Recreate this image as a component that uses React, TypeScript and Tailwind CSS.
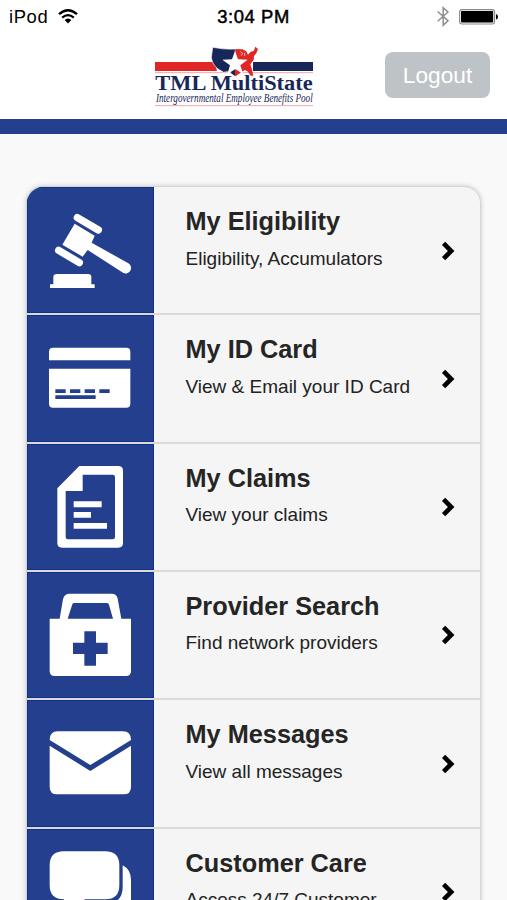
import type { ReactNode } from "react";

type MenuItem = {
  title: string;
  subtitle: string;
  icon: ReactNode;
};

const items: MenuItem[] = [
  {
    title: "My Eligibility",
    subtitle: "Eligibility, Accumulators",
    icon: (
      <>
        <g stroke="#fff" strokeWidth="22" strokeLinecap="round">
          <path d="M151 92 214 129" />
          <path d="M95 190 157 227" />
        </g>
        <path d="M143 110 203 146 194 167 304 229A16 16 0 0 1 288 257L182 189 167 209 106 173Z" />
        <path d="M79 292V271Q79 261 89 261H183Q193 261 193 271V292H203V303H69V292Z" />
      </>
    ),
  },
  {
    title: "My ID Card",
    subtitle: "View & Email your ID Card",
    icon: (
      <>
        <path d="M66 136V110Q66 98 78 98H298Q310 98 310 110V136Z" />
        <path d="M66 161H310V266Q310 278 298 278H78Q66 278 66 266Z" />
        <path
          fill="#243f8e"
          d="M85 223H116V234H85ZM129 223H160V234H129ZM173 223H204V234H173ZM217 223H248V234H217ZM85 241H206V252H85Z"
        />
      </>
    ),
  },
  {
    title: "My Claims",
    subtitle: "View your claims",
    icon: (
      <>
        <path
          fillRule="evenodd"
          d="M157 66H274Q288 66 288 80V297Q288 311 274 311H105Q91 311 91 297V133ZM167 92V141H116V279Q116 286 123 286H257Q264 286 264 279V99Q264 92 257 92Z"
        />
        <path d="M140 172H224V190H140ZM140 204H192V221H140ZM140 237H240V254H140Z" />
      </>
    ),
  },
  {
    title: "Provider Search",
    subtitle: "Find network providers",
    icon: (
      <path
        fillRule="evenodd"
        d="M68 140H98L108 82Q111 65 128 65H254Q269 65 272 80L283 140H312V297Q312 312 297 312H83Q68 312 68 297ZM122 140H258L246 98Q245 93 240 93H142Q137 93 136 97ZM172 178V212H138V246H172V281H207V246H242V212H207V178Z"
      />
    ),
  },
  {
    title: "My Messages",
    subtitle: "View all messages",
    icon: (
      <>
        <path d="M68 120Q68 94 92 94H288Q312 94 312 120L190 195Z" />
        <path d="M68 137 190 213 312 137V260Q312 283 289 283H91Q68 283 68 260Z" />
      </>
    ),
  },
  {
    title: "Customer Care",
    subtitle: "Access 24/7 Customer",
    icon: (
      <>
        <path d="M110 67H235Q277 67 277 109V169Q277 211 235 211H174L111 260V211Q68 211 68 169V109Q68 67 110 67Z" />
        <path d="M287 109Q312 122 312 153V211Q312 240 290 245H200L215 226H240Q287 220 287 175Z" />
      </>
    ),
  },
];

function StatusBar() {
  return (
    <div className="flex h-[34px] items-center justify-between pl-[9px] pr-[9px] text-black">
      <div className="flex w-[160px] items-center gap-[10px]">
        <span className="text-[18.4px] leading-[34px] tracking-[0.6px]">iPod</span>
        <svg className="-mt-0.5" width="20" height="15" viewBox="0 0 20 15" fill="none" stroke="#000" strokeWidth="2.3">
          <path d="M1 5.2Q10-2.8 19 5.2" />
          <path d="M4.2 8.6Q10 3.6 15.8 8.6" />
          <path d="M6.6 11Q10 8 13.4 11L10 14.6Z" fill="#000" stroke="none" />
        </svg>
      </div>
      <span className="whitespace-nowrap text-[18.4px] leading-[34px] tracking-[0.6px] [-webkit-text-stroke:0.5px_#000]">
        3:04 PM
      </span>
      <div className="flex w-[160px] items-center justify-end gap-[10px]">
        <svg className="-mt-0.5" width="12" height="21" viewBox="0 0 12 21" fill="none" stroke="#8e8e8e" strokeWidth="1.5">
          <path d="M.7 5.5 11 14.6 6.2 19.3V1.7L11 6 .7 15.3" />
        </svg>
        <svg className="-mt-px" width="39" height="16" viewBox="0 0 39 16">
          <rect x=".6" y=".6" width="35" height="14.4" rx="2.5" fill="#fff" stroke="#888" strokeWidth="1.1" />
          <rect x="2" y="2" width="32.2" height="11.6" rx="1" />
          <path d="M37 5Q39 5.4 39 7.8T37 10.6Z" />
        </svg>
      </div>
    </div>
  );
}

function Logo() {
  return (
    <svg
      className="overflow-visible"
      width="158"
      height="61"
      viewBox="30 18 474 183"
      fontFamily="'Liberation Serif', serif"
    >
      <path fill="#e12726" d="M30 66H209L216 93H30Z" />
      <path fill="#17275a" d="M324 66H504V93H324Z" />
      <path stroke="#f6a5a5" strokeWidth="3" d="M30 98H504M30 197H504" />
      {/* western half of the map */}
      <path
        fill="#17275a"
        stroke="#fff"
        strokeWidth="2"
        d="M203 22Q235 29 271 27V97L262 100 246 95 236 97 219 87Q202 74 199 52Z"
      />
      {/* eastern half of the map */}
      <path
        fill="#e12726"
        d="M271 27 292 28 304 34 309 44 317 35 326 33 331 20 339 27 334 40 327 48 326 60 316 73 321 89 325 107 317 107 309 95 300 90 284 100 271 108Z"
      />
      <path fill="none" stroke="#fff" strokeWidth="2" d="M286 35 293 40 289 47M299 38V48" />
      <path
        fill="#fff"
        d="M270 33 279 58 308 59 286 76 295 103 271 87 247 103 255 76 232 59 261 58Z"
      />
      <path fill="#17275a" d="M271 90V109L257 99Z" />
      <path fill="#e12726" d="M271 90 285 99 271 109Z" />
      <text x="31" y="151" fontSize="64" fontWeight="700" fill="#17275a" textLength="472" lengthAdjust="spacingAndGlyphs">
        TML MultiState
      </text>
      <text x="33" y="186" fontSize="38" fontStyle="italic" fill="#17275a" textLength="470" lengthAdjust="spacingAndGlyphs">
        Intergovernmental Employee Benefits Pool
      </text>
    </svg>
  );
}

function MenuRow({ title, subtitle, icon }: MenuItem) {
  return (
    <li className="flex h-[128.3px] border-b-2 border-[#dadada]">
      <div className="w-[126.5px] shrink-0 bg-[#243f8e] shadow-[inset_0_0_0_1px_#12308a]">
        <svg width="126" height="126" viewBox="0 0 378 378" fill="#fff">
          {icon}
        </svg>
      </div>
      <div className="min-w-0 flex-1 pl-8 pt-[19px]">
        <h2 className="whitespace-nowrap text-[25.3px] font-bold leading-[30px] text-[#252525]">{title}</h2>
        <p className="mt-[11.5px] whitespace-nowrap text-[19px] leading-[22px] text-[#222]">{subtitle}</p>
      </div>
      <svg className="mr-[25px] mt-[53.5px] shrink-0" width="14" height="20" viewBox="0 0 14 20" fill="none" stroke="#000" strokeWidth="4.6">
        <path d="M2.6 2.4 10.2 10 2.6 17.6" />
      </svg>
    </li>
  );
}

export default function App() {
  return (
    <div className="h-[900px] w-[507px] overflow-hidden bg-[#f9f9f9] font-['Liberation_Sans',Arial,sans-serif]">
      <header className="h-[134px] border-b-[15px] border-[#243f8e] bg-white">
        <StatusBar />
        <div className="flex justify-between pl-[155px] pr-[17px] pt-3">
          <Logo />
          <button className="mt-1.5 h-[46px] w-[105px] rounded-lg bg-[#bdc3c7] pt-px text-[22.7px] leading-none text-white">
            Logout
          </button>
        </div>
      </header>
      <ul className="ml-[26px] mt-[52.1px] w-[455px] overflow-hidden rounded-[17px] border border-[#d5d5d5] bg-[#f5f5f5] shadow-[0_0_5px_rgba(0,0,0,0.2)]">
        {items.map((item) => (
          <MenuRow key={item.title} {...item} />
        ))}
      </ul>
    </div>
  );
}
